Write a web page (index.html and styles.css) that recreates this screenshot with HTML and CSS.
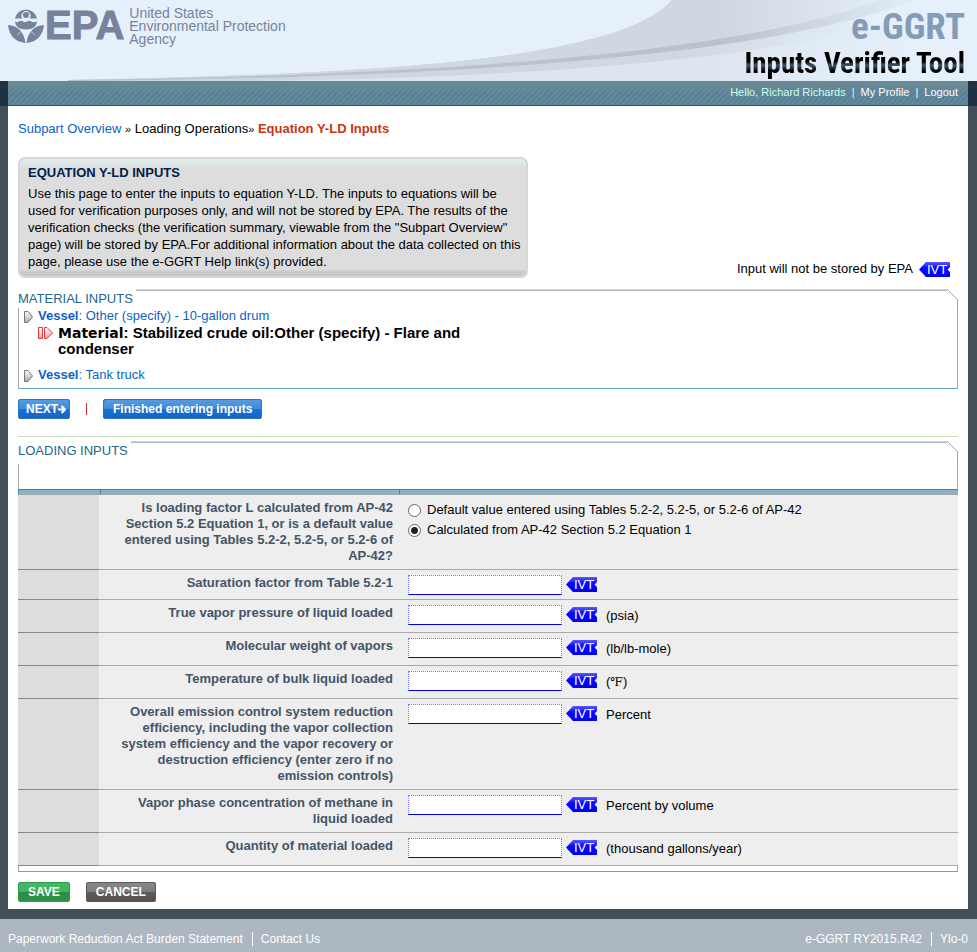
FILE: index.html
```html
<!DOCTYPE html>
<html lang="en">
<head>
<meta charset="utf-8">
<title>e-GGRT Inputs Verifier Tool</title>
<link rel="stylesheet" href="styles.css">
</head>
<body>
<svg class="sprite" aria-hidden="true">
  <defs>
    <linearGradient id="ivt-fill" x1="0" y1="0" x2="0" y2="1">
      <stop offset="0" stop-color="#5a5aff"/><stop offset=".4" stop-color="#0a0aff"/><stop offset="1" stop-color="#0000f0"/>
    </linearGradient>
    <linearGradient id="grey-arrow" x1="0" y1="0" x2="0" y2="1">
      <stop offset="0" stop-color="#fff"/><stop offset="1" stop-color="#aaa"/>
    </linearGradient>
    <linearGradient id="red-arrow" x1="0" y1="0" x2="0" y2="1">
      <stop offset="0" stop-color="#fff"/><stop offset="1" stop-color="#f59a9a"/>
    </linearGradient>
    <symbol id="ivt" viewBox="0 0 31 15">
      <path d="M0 7.5 7 0H31V5L28.500 7.500 31 10V15H7Z" fill="url(#ivt-fill)"/>
      <text x="8" y="12" class="ivt-text">IVT</text>
    </symbol>
    <symbol id="arrow" viewBox="0 0 9 12"><path d="M.5.5H4L8.500 6 4 11.500H.5Z" fill="url(#grey-arrow)" stroke="#777"/></symbol>
    <symbol id="arrow-current" viewBox="0 0 15 12"><path d="M.5.5H4.500V11.500H.5ZM6.500.5H9L14.500 6 9 11.500H6.500Z" fill="url(#red-arrow)" stroke="#d23c3c"/></symbol>
    <symbol id="corner" viewBox="0 0 11 23"><path d="M0 .5H.5L10.500 10.500V23" fill="none" stroke="#a3a8ad"/></symbol>
  </defs>
</svg>

<header class="banner">
  <svg class="swoosh" viewBox="0 0 977 81" aria-hidden="true">
    <defs>
      <linearGradient id="fade" gradientUnits="userSpaceOnUse" x1="0" x2="977" y1="0" y2="0"><stop offset="0" stop-color="#cfd7e1"/><stop offset=".74" stop-color="#d0d7e1"/><stop offset=".93" stop-color="#e5f0fb"/></linearGradient>
      <linearGradient id="band" gradientUnits="userSpaceOnUse" x1="0" x2="977" y1="0" y2="0"><stop offset="0" stop-color="#b8c0ca"/><stop offset=".74" stop-color="#bac2cc"/><stop offset=".92" stop-color="#e0eaf5"/></linearGradient>
      <linearGradient id="under" gradientUnits="userSpaceOnUse" x1="0" x2="977" y1="0" y2="0"><stop offset="0" stop-color="#ccd4de"/><stop offset=".7" stop-color="#d0d8e1"/><stop offset=".9" stop-color="#e5f0fb"/></linearGradient>
      <linearGradient id="floor" gradientUnits="userSpaceOnUse" x1="0" x2="977" y1="0" y2="0"><stop offset="0" stop-color="#dbe4ed"/><stop offset=".72" stop-color="#dde6ef"/><stop offset=".94" stop-color="#e5f0fb"/></linearGradient>
    </defs>
    <path d="M68 80C380 74 620 60 672 0H977V81H68Z" fill="url(#floor)"/>
    <path d="M68 80C380 74 620 60 672 0H977C800 58 560 77 250 81H68Z" fill="url(#under)"/>
    <path d="M68 80C380 74 620 60 672 0H900C760 54 460 74 68 81Z" fill="url(#fade)"/>
    <path d="M68 80C460 75 740 52 880 0H915C770 56 460 78 68 81Z" fill="url(#band)"/>
  </svg>
  <div class="epa">
    <svg class="flower" viewBox="0 0 36 36" aria-hidden="true">
      <path fill="#77839c" d="M7 11.500A11.200 11.200 0 0 1 29 11.500H21.500A4.500 4.500 0 1 0 14.500 11.500ZM7 14.500Q9 16 11 14.500Q13 13 15 14.500Q17 16 19 14.500Q21 13 23 14.500Q26 16 29 14.500C28.500 19.500 25 22.500 18 22.500S7.500 19.500 7 14.500ZM0 18C10 18.500 16 25 17.500 36C7 35 1 28 0 18ZM36 18C26 18.500 20 25 18.500 36C29 35 35 28 36 18Z"/>
      <circle cx="18" cy="8" r="3" fill="#77839c"/>
      <path d="M9 28Q12 24 16 24.500M27 28Q24 24 20 24.500" stroke="#e5f0fb" stroke-width=".6" fill="none"/>
    </svg>
    <strong class="epa-name">EPA</strong>
    <span class="epa-full">United States<br>Environmental Protection<br>Agency</span>
  </div>
  <div class="product">
    <span class="product-name">e-GGRT</span>
    <span class="product-tool">Inputs Verifier Tool</span>
  </div>
</header>

<nav class="userbar">
  <div class="userbar-inner">
    <span class="hello">Hello, Richard Richards</span><span>|</span><a href="#">My Profile</a><span>|</span><a href="#">Logout</a>
  </div>
</nav>

<div class="frame">
<main class="content">
  <div class="crumbs">
    <a href="#">Subpart Overview</a> <small>»</small> Loading Operations<small>»</small> <strong>Equation Y-LD Inputs</strong>
  </div>

  <div class="intro">
    <section class="info">
      <h1>EQUATION Y-LD INPUTS</h1>
      <p>Use this page to enter the inputs to equation Y-LD. The inputs to equations will be used for verification purposes only, and will not be stored by EPA. The results of the verification checks (the verification summary, viewable from the "Subpart Overview" page) will be stored by EPA.For additional information about the data collected on this page, please use the e-GGRT Help link(s) provided.</p>
    </section>
    <div class="key">Input will not be stored by EPA <svg class="ivt"><use href="#ivt"/></svg></div>
  </div>

  <section class="panel">
    <div class="panel-head"><h2>MATERIAL INPUTS</h2><i class="rule"></i><svg class="corner"><use href="#corner"/></svg></div>
    <div class="panel-body">
      <ul class="tree">
        <li><svg class="arrow"><use href="#arrow"/></svg><a href="#"><b>Vessel</b>: Other (specify) - 10-gallon drum</a></li>
        <li class="current"><svg class="arrow-current"><use href="#arrow-current"/></svg><span><b class="kind">Material</b>: Stabilized crude oil:Other (specify) - Flare and condenser</span></li>
        <li><svg class="arrow"><use href="#arrow"/></svg><a href="#"><b>Vessel</b>: Tank truck</a></li>
      </ul>
    </div>
  </section>

  <div class="actions">
    <button class="btn blue next" type="button">NEXT<svg viewBox="0 0 8 9" aria-hidden="true"><path d="M0 4.500H6M3.500 1 7 4.500 3.500 8" fill="none" stroke="#fff" stroke-width="2"/></svg></button>
    <span class="bar"></span>
    <button class="btn blue" type="button">Finished entering inputs</button>
  </div>

  <form class="loading">
  <section class="panel">
    <div class="panel-head"><h2>LOADING INPUTS</h2><i class="rule"></i><svg class="corner"><use href="#corner"/></svg></div>
    <div class="panel-body form-body">
      <table>
        <colgroup><col class="c-side"><col class="c-label"><col></colgroup>
        <thead><tr><td></td><td></td><td></td></tr></thead>
        <tbody>
        <tr><td></td><th scope="row" id="factor">Is loading factor L calculated from AP-42 Section 5.2 Equation 1, or is a default value entered using Tables 5.2-2, 5.2-5, or 5.2-6 of AP-42?</th>
          <td><div class="choices" role="radiogroup" aria-labelledby="factor">
            <label><input type="radio" name="factor">Default value entered using Tables 5.2-2, 5.2-5, or 5.2-6 of AP-42</label>
            <label><input type="radio" name="factor" checked>Calculated from AP-42 Section 5.2 Equation 1</label>
          </div></td></tr>
        <tr><td></td><th scope="row"><label for="f1">Saturation factor from Table 5.2-1</label></th><td><div class="field"><input type="text" id="f1"><svg class="ivt"><use href="#ivt"/></svg></div></td></tr>
        <tr><td></td><th scope="row"><label for="f2">True vapor pressure of liquid loaded</label></th><td><div class="field"><input type="text" id="f2"><svg class="ivt"><use href="#ivt"/></svg><span class="unit">(psia)</span></div></td></tr>
        <tr><td></td><th scope="row"><label for="f3">Molecular weight of vapors</label></th><td><div class="field"><input type="text" id="f3"><svg class="ivt"><use href="#ivt"/></svg><span class="unit">(lb/lb-mole)</span></div></td></tr>
        <tr><td></td><th scope="row"><label for="f4">Temperature of bulk liquid loaded</label></th><td><div class="field"><input type="text" id="f4"><svg class="ivt"><use href="#ivt"/></svg><span class="unit">(<span class="deg">℉</span>)</span></div></td></tr>
        <tr><td></td><th scope="row"><label for="f5">Overall emission control system reduction efficiency, including the vapor collection system efficiency and the vapor recovery or destruction efficiency (enter zero if no emission controls)</label></th><td><div class="field"><input type="text" id="f5"><svg class="ivt"><use href="#ivt"/></svg><span class="unit">Percent</span></div></td></tr>
        <tr><td></td><th scope="row"><label for="f6">Vapor phase concentration of methane in liquid loaded</label></th><td><div class="field"><input type="text" id="f6"><svg class="ivt"><use href="#ivt"/></svg><span class="unit">Percent by volume</span></div></td></tr>
        <tr><td></td><th scope="row"><label for="f7">Quantity of material loaded</label></th><td><div class="field"><input type="text" id="f7"><svg class="ivt"><use href="#ivt"/></svg><span class="unit">(thousand gallons/year)</span></div></td></tr>
        </tbody>
      </table>
    </div>
  </section>
  <div class="submit">
    <button class="btn green" type="submit">SAVE</button>
    <button class="btn grey" type="button">CANCEL</button>
  </div>
  </form>
</main>
</div>

<footer class="footer">
  <div><a href="#">Paperwork Reduction Act Burden Statement</a><a href="#">Contact Us</a></div>
  <div><span>e-GGRT RY2015.R42</span><span>Ylo-0</span></div>
</footer>
</body>
</html>
```
FILE: styles.css
```css
* { box-sizing: border-box; }
body {
  margin: 0;
  min-height: 100vh;
  display: flex;
  flex-direction: column;
  background: #adb7c2;
  font: 13px/16px "Liberation Sans", Arial, sans-serif;
  color: #000;
}
a { color: #0b62c8; text-decoration: none; }
h1, h2, p, ul { margin: 0; padding: 0; }
.sprite { position: absolute; width: 0; height: 0; }

.banner {
  position: relative;
  height: 81px;
  background: #e5f0fb;
  display: flex;
  justify-content: space-between;
  padding: 7px 12px 0 8px;
  overflow: hidden;
}
.swoosh { position: absolute; top: 0; right: 0; width: 977px; height: 81px; }
.epa, .product { position: relative; }
.epa { display: flex; align-items: flex-start; color: #77839c; }
.flower { width: 36px; height: 36px; }
.epa-name {
  font: bold 40px/36px "Liberation Sans", Arial, sans-serif;
  -webkit-text-stroke: 1px #77839c;
  padding: 0 5px 0 1px;
}
.epa-full { font-size: 14px; line-height: 13px; }
.product { display: flex; flex-direction: column; align-items: flex-end; }
.product-name { font: bold 37px/40px "Roboto Condensed", Roboto, sans-serif; color: #849cb7; }
.product-tool {
  font: bold 29px/32px "Roboto Condensed", Roboto, sans-serif;
  color: transparent;
  background: linear-gradient(#000 45%, #3f5568 57%, #000 75%);
  background-clip: text;
}

.userbar { background: #213144; padding: 0 9px 0 8px; }
.userbar-inner {
  height: 25px;
  display: flex;
  justify-content: flex-end;
  gap: 6px;
  padding-right: 10px;
  border-bottom: 1px solid #37505f;
  background:
    linear-gradient(#688996 15%, #68899640 60%, #62899680),
    repeating-linear-gradient(135deg, #527a99 0 2px, #648a9a 2px 4px);
  color: #fff;
  font-size: 11px;
  line-height: 23px;
}
.userbar a { color: #fff; }
.hello, .hello + span { color: #ceffe9; }

.frame { background: #435059; padding: 0 9px 10px 8px; }
.content { background: #fff; padding: 15px 10px 7px; }
.crumbs small { font-size: 11px; }
.crumbs strong { color: #cc3311; }

.intro { display: flex; justify-content: space-between; align-items: flex-end; margin-top: 20px; }
.info {
  width: 510px;
  padding: 6px 0 6px 8px;
  border: 2px solid #d7d7d7;
  border-radius: 7px;
  background: linear-gradient(#e2eeee, #ddd 9px, #ddd calc(100% - 7px), #c9c9c9 calc(100% - 4px));
}
.info h1 { font-size: 13px; line-height: 16px; color: #01214a; }
.info p { margin-top: 4px; line-height: 17px; }
.key { display: flex; align-items: center; gap: 6px; padding: 0 8px 1px 0; }
.ivt { width: 31px; height: 15px; flex: none; }
.ivt-text { font: 13px "Liberation Sans", sans-serif; fill: #fff; }

.panel-head { display: flex; height: 23px; }
.panel-head h2 { font-size: 13px; font-weight: normal; line-height: 20px; color: #226688; padding-right: 3px; }
.rule { flex: 1; height: 2px; border-top: 1px solid #c5d3e2; border-bottom: 1px solid #b3b9bf; }
.corner { width: 11px; height: 23px; }
.panel-body { border: 1px solid #a9a9a9; border-top: 0; border-bottom-color: #5ea8cd; padding: 0 4px 5px; }
.panel { margin-top: 11px; }
.tree { list-style: none; margin-top: -4px; position: relative; }
.tree li { display: flex; align-items: flex-start; max-width: 460px; }
.arrow { width: 9px; height: 12px; margin: 3px 5px 0 1px; flex: none; }
.tree .current { padding: 1px 0 10px 15px; font-size: 15px; font-weight: bold; }
.arrow-current { width: 15px; height: 12px; margin: 2px 5px 0 0; flex: none; }
.kind { font: bold 14px/14px "DejaVu Sans", Verdana, sans-serif; }

.actions { display: flex; align-items: center; margin-top: 10px; }
.btn {
  height: 20px;
  border: 0;
  border-radius: 3px;
  padding: 0 10px;
  color: #fff;
  font: bold 12px/20px "Liberation Sans", Arial, sans-serif;
  white-space: nowrap;
}
.next { display: flex; align-items: center; padding: 0 4px 0 8px; }
.next svg { width: 8px; height: 9px; }
.blue { background: linear-gradient(#5b9ce0, #3d8bdc 50%, #1a6fd0 50%, #1266c9); box-shadow: inset 0 0 0 1px #2a74c4; }
.green { background: linear-gradient(#45b866, #3fb65d 50%, #2a8b45 50%, #2f9249); box-shadow: inset 0 0 0 1px #2f9e4c; }
.grey { background: linear-gradient(#898989, #7c7c7c 50%, #5c5c5c 50%, #525252); box-shadow: inset 0 0 0 1px #5a5a5a; }
.bar { width: 1px; height: 12px; margin: 0 16px; background: #b33; }

.loading { margin-top: 17px; border-top: 1px solid #cce0b8; }
.loading .panel { margin-top: 4px; }
.form-body { padding: 25px 0 5px; }
.form-body table { margin: 0 -1px; width: calc(100% + 2px); border-collapse: separate; border-spacing: 0; table-layout: fixed; background: #eee; }
.c-side { width: 82px; }
.c-label { width: 299px; }
thead td { height: 6px; padding: 0; background: #85b3c8; border-top: 1px solid #3f88a8; border-left: 1px solid #3f88a8; border-bottom: 1px solid #a9a9a9; }
tbody td, tbody th { border-bottom: 1px solid #a9a9a9; vertical-align: top; }
tbody td:first-child { background: #ddd; border-right: 1px solid #eee; border-bottom-color: #888; }
tbody th { padding: 5px 6px 5px 10px; text-align: right; color: #445566; }
tbody td:last-child { padding: 5px 0 4px 9px; }
.choices label { display: flex; align-items: center; gap: 6px; height: 20px; }
.choices input { width: 13px; height: 13px; margin: 0; appearance: none; border: 1px solid #666; border-radius: 50%; background: #fff; }
.choices input:checked { background: radial-gradient(circle, #222 0 3px, #fff 4px); }
.field { display: flex; align-items: flex-start; }
.field input { width: 154px; height: 20px; padding: 0 2px; border: 1px dotted #7777ff; border-bottom: 1px solid #0000ee; background: #fff; font: inherit; }
.field .ivt { margin: 2px 9px 0 4px; }
.unit { line-height: 21px; padding-bottom: 2px; }
.deg { font: 12px/12px "DejaVu Serif", serif; }
.submit { display: flex; gap: 16px; margin-top: 10px; }

.footer { display: flex; justify-content: space-between; padding: 13px 9px 6px 8px; font-size: 12px; line-height: 14px; color: #fff; }
.footer a { color: #fff; }
.footer div { display: flex; }
.footer div > * + * { margin-left: 9px; padding-left: 8px; border-left: 1px solid #fff; }
```
